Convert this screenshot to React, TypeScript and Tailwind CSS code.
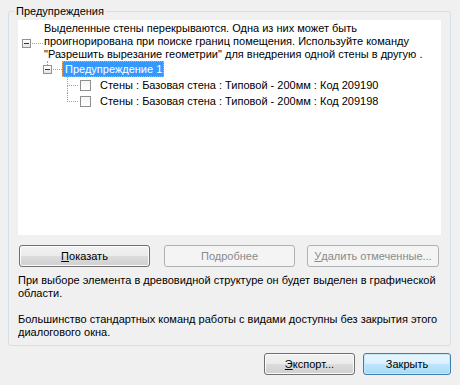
const font = { fontFamily: '"Liberation Sans", Arial, sans-serif' }

function Btn({ label, under, w, kind = 'normal' }: { label: string; under?: number; w: string; kind?: 'normal' | 'disabled' | 'default' }) {
  const base = 'flex h-[22px] items-center justify-center rounded-[3px] border text-[11px] leading-[13px]'
  const styles = {
    normal:
      'border-[#707070] bg-[linear-gradient(#f2f2f2_0%,#ebebeb_50%,#dddddd_50%,#cfcfcf_100%)] text-black shadow-[inset_0_0_0_1px_#fbfbfb]',
    disabled: 'border-[#adb2b5] bg-[#f4f4f4] text-[#8a8a8a]',
    default:
      'border-[#3c7fb1] bg-[linear-gradient(#eaf6fd_0%,#d9f0fc_50%,#bee6fd_50%,#a7d9f5_100%)] text-black shadow-[inset_0_0_0_1px_#c4e8fa]',
  }
  const text =
    under === undefined ? (
      label
    ) : (
      <>
        {label.slice(0, under)}
        <span className="underline underline-offset-[1px]">{label[under]}</span>
        {label.slice(under + 1)}
      </>
    )
  return <div className={`${base} ${styles[kind]} ${w}`}>{text}</div>
}

function Expander() {
  return (
    <div className="flex h-[9px] w-[9px] items-center justify-center border border-[#919191] bg-[linear-gradient(#ffffff,#e4e4e4)]">
      <div className="h-px w-[5px] bg-[#1e395b]" />
    </div>
  )
}

function Item({ text, last }: { text: string; last?: boolean }) {
  return (
    <div className="flex h-[16px] items-start">
      <div className="w-[49px] shrink-0" />
      <div className="flex h-[16px] w-[11px] shrink-0 flex-col">
        <div className="h-[9px] border-b border-l border-dotted border-[#a0a0a0]" />
        {!last && <div className="h-[7px] border-l border-dotted border-[#a0a0a0]" />}
      </div>
      <div className="ml-[2px] mt-[3px] h-[11px] w-[11px] shrink-0 border border-[#8e8f8f] bg-[linear-gradient(#f4f4f4,#ffffff)]" />
      <div className="ml-[9px] mt-[2px] whitespace-nowrap leading-[13px]">{text}</div>
    </div>
  )
}

export default function App() {
  return (
    <div className="h-[385px] w-[460px] overflow-hidden bg-[#f0f0f0] text-[11px] text-black" style={font}>
      <fieldset className="ml-[8px] mt-[5px] h-[341px] w-[443px] rounded-[3px] border border-[#d5dfe5] px-[9px]">
        <legend className="-ml-[4px] px-[2px] leading-[13px]">Предупреждения</legend>

        <div className="mt-[2px] h-[215px] w-[423px] bg-white pt-[1px]">
          <div className="flex h-[40px] items-start">
            <div className="flex w-[26px] shrink-0 items-center pl-[4px] pt-[18px]">
              <Expander />
              <div className="ml-[1px] w-[11px] border-t border-dotted border-[#a0a0a0]" />
            </div>
            <div className="whitespace-nowrap pt-[1px] leading-[13px]">
              <div>Выделенные стены перекрываются. Одна из них может быть</div>
              <div>проигнорирована при поиске границ помещения. Используйте команду</div>
              <div>"Разрешить вырезание геометрии" для внедрения одной стены в другую .</div>
            </div>
          </div>

          <div className="flex h-[16px] items-start">
            <div className="w-[25px] shrink-0" />
            <div className="flex w-[9px] shrink-0 flex-col items-center">
              <div className="h-[4px] border-l border-dotted border-[#a0a0a0]" />
              <Expander />
            </div>
            <div className="mt-[8px] ml-[1px] w-[9px] border-t border-dotted border-[#a0a0a0]" />
            <div className="h-[16px] w-[102px] whitespace-nowrap border border-dotted border-[#e8a868] bg-[#3399ff] pl-[2px] leading-[14px] text-white">
              Предупреждение 1
            </div>
          </div>

          <Item text="Стены : Базовая стена : Типовой - 200мм : Код 209190" />
          <Item text="Стены : Базовая стена : Типовой - 200мм : Код 209198" last />
        </div>

        <div className="mt-[10px] flex">
          <div className="ml-[1px]">
            <Btn label="Показать" under={0} w="w-[131px]" />
          </div>
          <div className="ml-[14px]">
            <Btn label="Подробнее" w="w-[131px]" kind="disabled" />
          </div>
          <div className="ml-[12px]">
            <Btn label="Удалить отмеченные..." under={0} w="w-[132px]" kind="disabled" />
          </div>
        </div>

        <div className="mt-[7px] leading-[13px]">
          <p>При выборе элемента в древовидной структуре он будет выделен в графической</p>
          <p>области.</p>
          <p className="mt-[13px]">Большинство стандартных команд работы с видами доступны без закрытия этого</p>
          <p>диалогового окна.</p>
        </div>
      </fieldset>

      <div className="mt-[7px] flex justify-end gap-[8px] pr-[9px]">
        <Btn label="Экспорт..." under={0} w="w-[91px]" />
        <Btn label="Закрыть" w="w-[88px]" kind="default" />
      </div>
    </div>
  )
}
